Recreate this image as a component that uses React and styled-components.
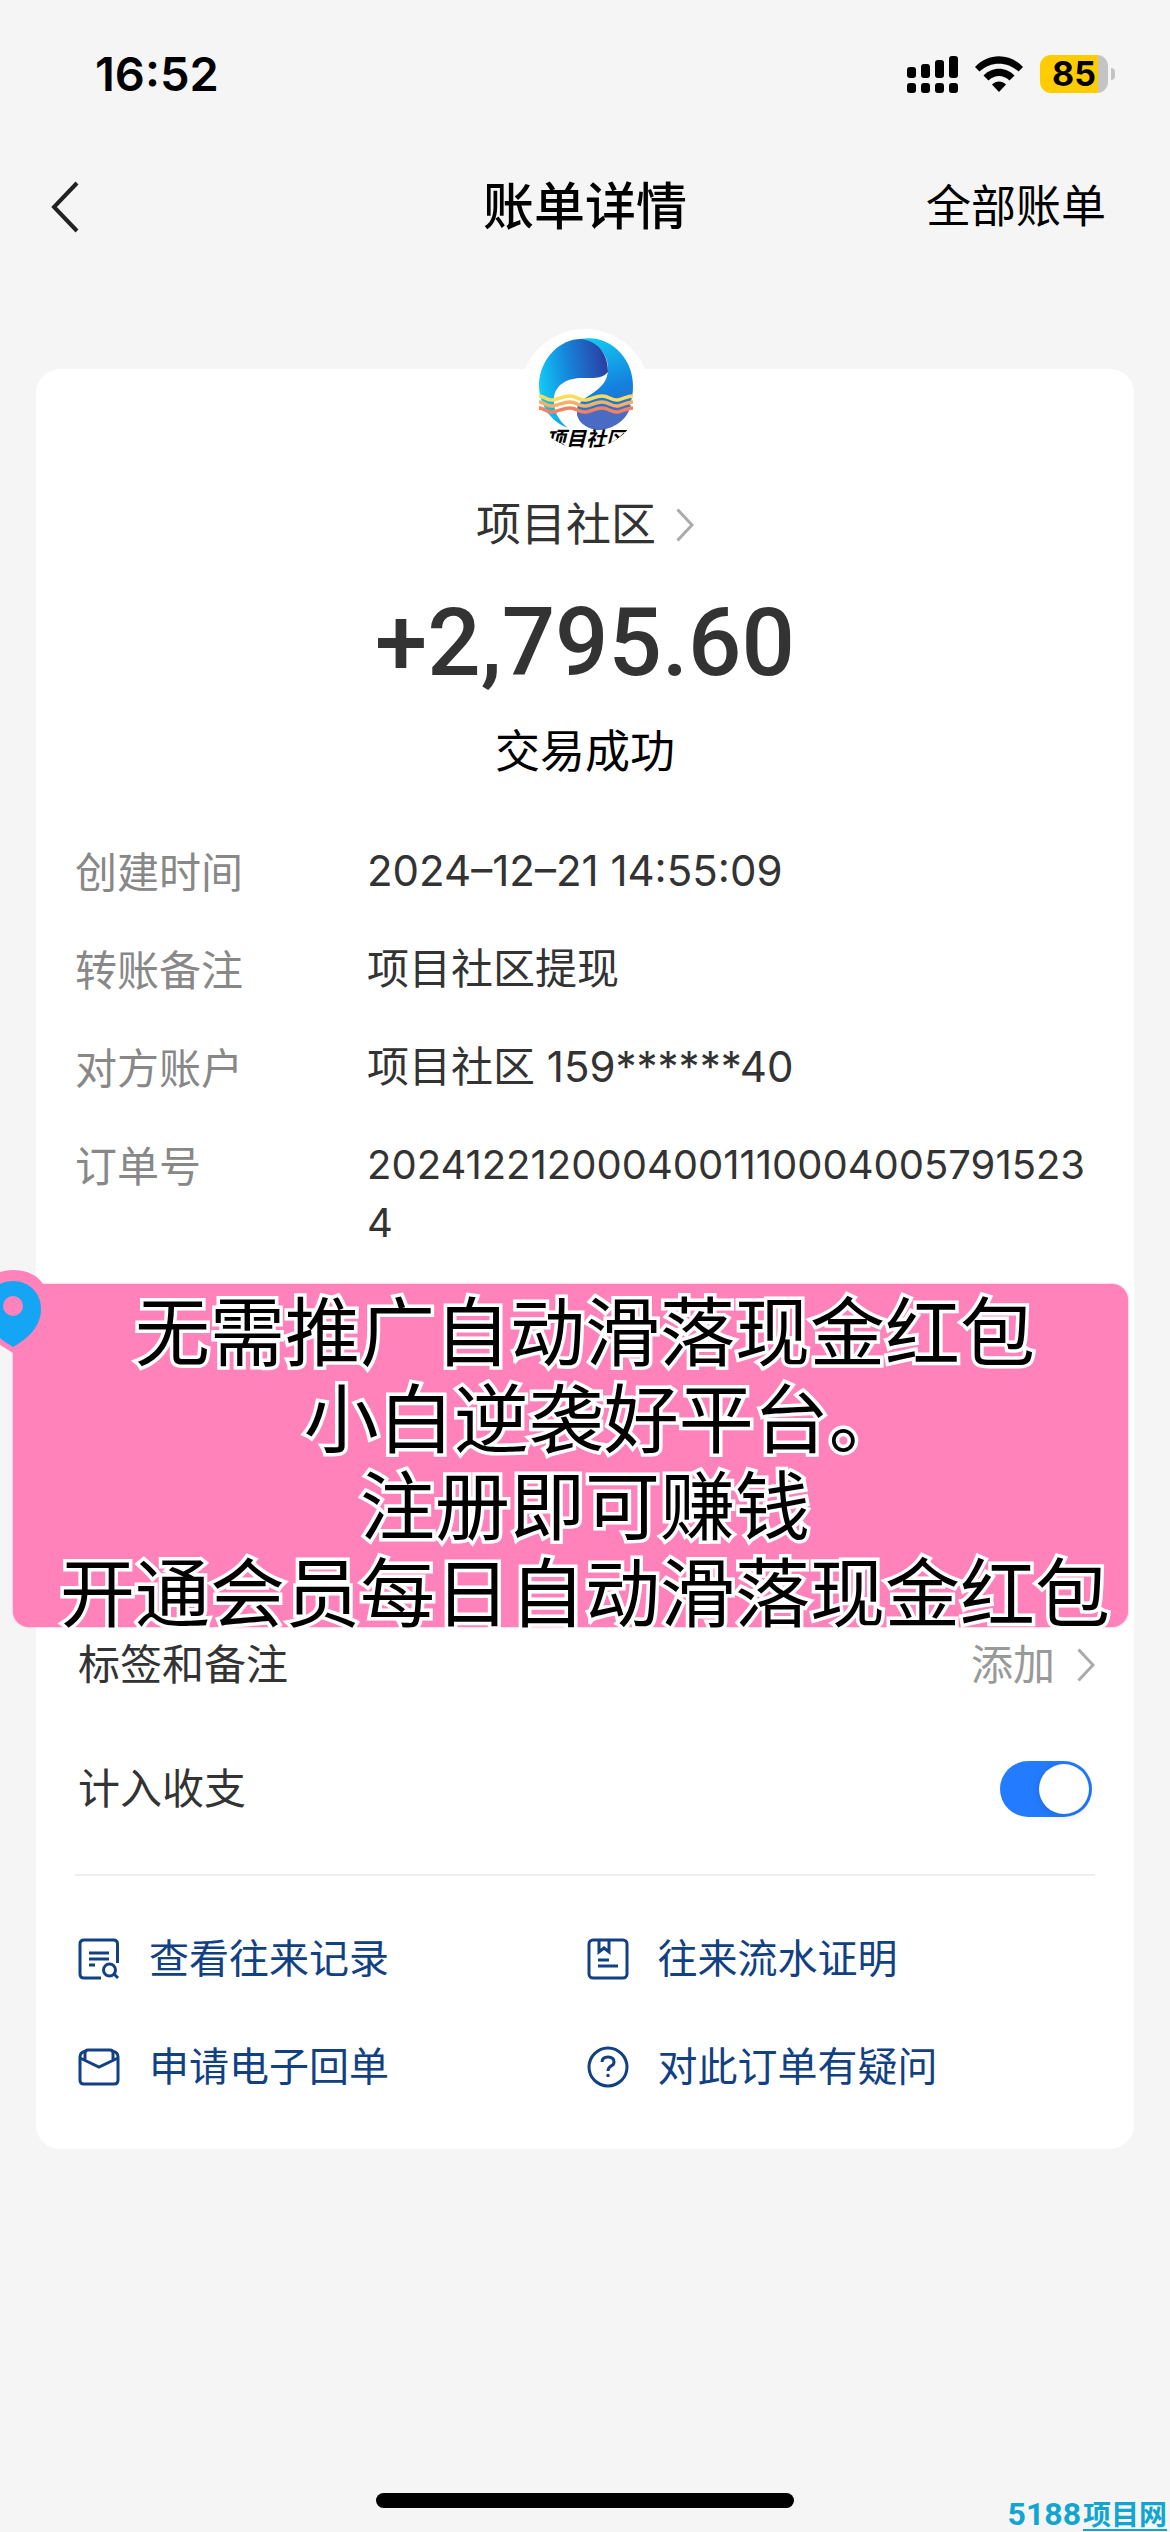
import React, { useState } from "react";
import styled, { createGlobalStyle } from "styled-components";

const GlobalStyle = createGlobalStyle`
  * {
    box-sizing: border-box;
  }

  body {
    margin: 0;
    background: #f5f5f5;
    font-family: Inter, "Noto Sans CJK SC", sans-serif;
    color: #333;
  }

  button {
    padding: 0;
    border: none;
    background: none;
    font: inherit;
    color: inherit;
    cursor: pointer;
  }
`;

const Page = styled.div`
  display: flex;
  flex-direction: column;
  min-height: 100vh;
  overflow: hidden;
`;

const StatusBar = styled.div`
  display: flex;
  align-items: center;
  justify-content: space-between;
  height: 148px;
  padding: 0 55px 0 95px;
  color: #000;
`;

const Clock = styled.span`
  font-size: 47px;
  font-weight: 600;
  line-height: 56px;
`;

const StatusIcons = styled.div`
  display: flex;
  align-items: center;
  gap: 17px;
`;

const Battery = styled.div`
  display: flex;
  align-items: center;
  gap: 3px;
`;

const BatteryBody = styled.div`
  width: 68px;
  height: 38px;
  border-radius: 11px;
  background: linear-gradient(to right, #ffcc00 58px, #c4c4c4 58px);
  font-size: 34px;
  font-weight: 700;
  line-height: 38px;
  text-align: center;
`;

const BatteryCap = styled.div`
  width: 4px;
  height: 12px;
  border-radius: 0 4px 4px 0;
  background: #c4c4c4;
`;

const NavBar = styled.header`
  display: grid;
  grid-template-columns: 1fr auto 1fr;
  align-items: center;
  height: 118px;
  padding: 0 50px;
  color: #000;
`;

const BackButton = styled.button`
  display: flex;
  justify-self: start;
`;

const Title = styled.h1`
  margin: 0;
  font-size: 51px;
  font-weight: 500;
  line-height: 72px;
`;

const AllBills = styled.button`
  justify-self: end;
  margin-right: 14px;
  font-size: 45px;
  line-height: 64px;
`;

const Card = styled.main`
  display: flex;
  flex-direction: column;
  margin: 103px 36px 0;
  padding: 0 39px 54px;
  border-radius: 24px;
  background: #fff;
`;

const Avatar = styled.div`
  display: flex;
  align-self: center;
  margin-top: -40px;
  border-radius: 50%;
  background: #fff;
`;

const Payee = styled.button`
  display: flex;
  align-self: center;
  align-items: center;
  gap: 20px;
  margin-top: 34px;
  font-size: 45px;
  line-height: 64px;
`;

const Amount = styled.div`
  margin-top: 28px;
  font-family: Roboto, sans-serif;
  font-size: 94px;
  font-weight: 500;
  line-height: 116px;
  text-align: center;
`;

const Status = styled.div`
  margin-top: 19px;
  color: #000;
  font-size: 45px;
  line-height: 64px;
  text-align: center;
`;

const Details = styled.dl`
  display: grid;
  grid-template-columns: 292px 1fr;
  row-gap: 38px;
  margin: 58px 0 0;
  font-size: 42px;
  line-height: 58px;
`;

const DetailLabel = styled.dt`
  padding-top: 2px;
  color: #888;
`;

const DetailValue = styled.dd`
  margin: 0;
  font-size: ${(props) => (props.$long ? "40px" : "42px")};
  word-break: break-all;
`;

const Banner = styled.section`
  position: relative;
  z-index: 1;
  height: 343px;
  margin: 32px -33px 0 -62px;
  padding: 5px 0 0 29px;
  border-radius: 16px;
  background: #ff82bb;
  box-shadow: 0 0 2px #ff82bb;
`;

const BannerLine = styled.p`
  margin: 0;
  color: #000;
  font-size: 75px;
  font-feature-settings: "halt";
  line-height: 87px;
  text-align: center;
  white-space: nowrap;
  -webkit-text-stroke: 7px #fff;
  paint-order: stroke fill;
`;

const BannerPin = styled.svg`
  position: absolute;
  top: -14px;
  left: -46px;
`;

const SettingRow = styled.div`
  display: flex;
  align-items: center;
  justify-content: space-between;
  height: ${(props) => props.$height};
  padding-left: 3px;
  font-size: 42px;
  line-height: 58px;
`;

const AddButton = styled.button`
  display: flex;
  align-items: center;
  gap: 22px;
  color: #999;
`;

const Switch = styled.input`
  appearance: none;
  width: 92px;
  height: 56px;
  margin: 0 3px 0 0;
  border-radius: 28px;
  background: #ccc;
  cursor: pointer;

  &::before {
    content: "";
    display: block;
    width: 50px;
    height: 50px;
    margin: 3px;
    border-radius: 50%;
    background: #fff;
    box-shadow: 0 2px 8px rgba(0, 0, 0, 0.15);
  }

  &:checked {
    background: #237bff;
  }

  &:checked::before {
    margin-left: 39px;
  }
`;

const Divider = styled.hr`
  width: 100%;
  height: 2px;
  margin: 0;
  border: none;
  background: #eee;
`;

const Links = styled.nav`
  display: grid;
  grid-template-columns: 1fr 1fr;
  row-gap: 52px;
  padding: 55px 0 0 3px;
`;

const LinkItem = styled.a`
  display: flex;
  align-items: center;
  gap: 29px;
  color: #114183;
  font-size: 40px;
  line-height: 56px;
  text-decoration: none;
`;

const Footer = styled.footer`
  display: grid;
  grid-template-columns: 1fr auto 1fr;
  align-items: end;
  margin-top: auto;
`;

const HomeIndicator = styled.div`
  grid-column: 2;
  width: 418px;
  height: 15px;
  margin-bottom: 24px;
  border-radius: 8px;
  background: #000;
`;

const Watermark = styled.div`
  display: flex;
  align-items: flex-end;
  gap: 2px;
  justify-self: end;
  margin-right: 3px;
  color: #12a5d0;
`;

const WatermarkText = styled.span`
  margin-bottom: 1px;
  border-bottom: 2px solid #12a5d0;
  font-size: 28px;
  font-weight: 700;
  line-height: 28px;
`;

const WatermarkNumber = styled.span`
  font-family: "Liberation Sans Narrow", Roboto, sans-serif;
  font-size: 32px;
  font-weight: 700;
  line-height: 36px;
`;

const SignalIcon = () => (
  <svg width="51" height="38" viewBox="0 0 51 38">
    <rect x="0" y="12" width="9" height="11" rx="3" />
    <rect x="14" y="9" width="9" height="14" rx="3" />
    <rect x="28" y="5" width="9" height="18" rx="3" />
    <rect x="42" y="1" width="9" height="22" rx="3" />
    <rect x="0" y="28" width="9" height="10" rx="3" />
    <rect x="14" y="28" width="9" height="10" rx="3" />
    <rect x="28" y="28" width="9" height="10" rx="3" />
    <rect x="42" y="28" width="9" height="10" rx="3" />
  </svg>
);

const WifiIcon = () => (
  <svg width="48" height="36" viewBox="0 0 48 36">
    <path d="M0 11 C13 -3.500 35 -3.500 48 11 L43.500 15.500 C32.500 5 15.500 5 4.500 15.500Z" />
    <path d="M8.500 19.500 C17 10.500 31 10.500 39.500 19.500 L34.500 24.500 C28.500 18.500 19.500 18.500 13.500 24.500Z" />
    <path d="M17 28.500 C21 24.500 27 24.500 31 28.500 L24 36Z" />
  </svg>
);

const ChevronRight = ({ color }) => (
  <svg width="18" height="34" viewBox="0 0 18 34" fill="none">
    <path d="M1.500 1.500 L16 17 L1.500 32.500" stroke={color} strokeWidth="3" />
  </svg>
);

const wave =
  "C25 67 26 72 33 71 C40 70 43 67 50 67 C57 67 59 72 66 71 C73 70 75 67 82 67 C89 67 92 72 98 71 C104 70 107 67 113 67";

const CommunityLogo = () => (
  <svg width="130" height="130" viewBox="0 0 130 130">
    <defs>
      <linearGradient id="right" x1="0.300" y1="0" x2="0.500" y2="1">
        <stop offset="0" stopColor="#12c8f5" />
        <stop offset="0.600" stopColor="#147fdd" />
        <stop offset="1" stopColor="#3b62c8" />
      </linearGradient>
      <linearGradient id="left" x1="0" y1="0.600" x2="1" y2="0.400">
        <stop offset="0" stopColor="#12cdf6" />
        <stop offset="0.450" stopColor="#1586dc" />
        <stop offset="1" stopColor="#2b3fa3" />
      </linearGradient>
      <clipPath id="round">
        <circle cx="65" cy="63" r="57" />
      </clipPath>
    </defs>
    <path
      d="M60 10 C90 4 114 30 113 58 C113 84 95 101 77 101 C66 99 56 92 57 80 C59 66 88 64 88 40 C88 24 78 14 60 10Z"
      fill="url(#right)"
    />
    <path
      d="M19 55 C20 28 42 9 62 10 C78 13 88 24 88 43 C82 50 74 49 65 49 C50 48 36 54 34 68 C33 82 38 91 48 99 C30 92 19 76 19 55Z"
      fill="url(#left)"
    />
    <path d="M57 84 L111 76 C107 92 92 101 77 101 C64 99 57 91 57 84Z" fill="#4a6bc4" />
    <g fill="none" strokeWidth="3.500">
      <path d={`M19 67 ${wave}`} stroke="#f8dc5c" />
      <path d={`M19 67 ${wave}`} stroke="#f8b163" transform="translate(0 6)" />
      <path d={`M19 67 ${wave}`} stroke="#f5825f" transform="translate(0 12)" />
    </g>
    <g clipPath="url(#round)">
      <text
        x="66"
        y="117"
        textAnchor="middle"
        fontSize="20"
        fontWeight="700"
        fontStyle="italic"
        fontFamily="Noto Sans CJK SC, sans-serif"
      >
        项目社区
      </text>
    </g>
  </svg>
);

const iconProps = {
  width: 42,
  height: 42,
  viewBox: "0 0 42 42",
  fill: "none",
  stroke: "currentColor",
  strokeWidth: 3,
};

const RecordsIcon = () => (
  <svg {...iconProps}>
    <path d="M39.500 25 V6 Q39.500 2 35.500 2 H6 Q2 2 2 6 V36 Q2 40 6 40 H23" />
    <path d="M11 15 H31 M11 21 H31 M11 27 H17" />
    <circle cx="31.500" cy="32" r="6" />
    <path d="M36 36 L40 40" />
  </svg>
);

const StatementIcon = () => (
  <svg {...iconProps}>
    <rect x="2" y="2" width="38" height="38" rx="4" />
    <path d="M12 2 V14 L17 10 L22 14 V2 M11 22 H22 M11 28 H31" />
  </svg>
);

const ReceiptIcon = () => (
  <svg {...iconProps}>
    <path d="M8 5 Q2 6 2 11 V34 Q2 38 6 38 H36 Q40 38 40 34 V11 Q40 6 34 5" />
    <path d="M7 14 V7 Q7 4 10 4 H32 Q35 4 35 7 V14 M2 12 L21 21 L40 12" />
  </svg>
);

const QuestionIcon = () => (
  <svg {...iconProps}>
    <circle cx="21" cy="21" r="19" />
    <path d="M15 16 Q15 11 21 11 Q27 11 27 16 Q27 19 24 20 Q21 22 21 25 M21 28 V31" />
  </svg>
);

const details = [
  { label: "创建时间", value: "2024–12–21 14:55:09" },
  { label: "转账备注", value: "项目社区提现" },
  { label: "对方账户", value: "项目社区 159******40" },
  { label: "订单号", value: "20241221200040011100040057915234", long: true },
];

const bannerLines = [
  "无需推广自动滑落现金红包",
  "小白逆袭好平台。",
  "注册即可赚钱",
  "开通会员每日自动滑落现金红包",
];

const links = [
  { label: "查看往来记录", Icon: RecordsIcon },
  { label: "往来流水证明", Icon: StatementIcon },
  { label: "申请电子回单", Icon: ReceiptIcon },
  { label: "对此订单有疑问", Icon: QuestionIcon },
];

const App = () => {
  const [counted, setCounted] = useState(true);

  return (
    <Page>
      <GlobalStyle />
      <StatusBar>
        <Clock>16:52</Clock>
        <StatusIcons>
          <SignalIcon />
          <WifiIcon />
          <Battery>
            <BatteryBody>85</BatteryBody>
            <BatteryCap />
          </Battery>
        </StatusIcons>
      </StatusBar>
      <NavBar>
        <BackButton aria-label="返回">
          <svg width="30" height="52" viewBox="0 0 30 52" fill="none">
            <path d="M27 2 L4 26 L27 50" stroke="#222" strokeWidth="4" />
          </svg>
        </BackButton>
        <Title>账单详情</Title>
        <AllBills>全部账单</AllBills>
      </NavBar>
      <Card>
        <Avatar>
          <CommunityLogo />
        </Avatar>
        <Payee>
          项目社区
          <ChevronRight color="#aaa" />
        </Payee>
        <Amount>+2,795.60</Amount>
        <Status>交易成功</Status>
        <Details>
          {details.map(({ label, value, long }) => (
            <React.Fragment key={label}>
              <DetailLabel>{label}</DetailLabel>
              <DetailValue $long={long}>{value}</DetailValue>
            </React.Fragment>
          ))}
        </Details>
        <Banner>
          <BannerPin width="80" height="96" viewBox="0 0 80 96">
            <path
              d="M46 0 C60 0 70 5 76 14 L80 30 L59 89 C38 80 8 62 8 36 C8 14 26 0 46 0Z"
              fill="#ff82bb"
            />
            <path
              d="M46 11 C62 11 74 23 74 39 C74 56 62 68 46 77 C30 68 18 56 18 39 C18 23 30 11 46 11Z"
              fill="#14a6f5"
            />
            <circle cx="46" cy="36" r="10" fill="#ff82bb" />
          </BannerPin>
          {bannerLines.map((line) => (
            <BannerLine key={line}>{line}</BannerLine>
          ))}
        </Banner>
        <SettingRow $height="76px">
          <span>标签和备注</span>
          <AddButton>
            添加
            <ChevronRight color="#aaa" />
          </AddButton>
        </SettingRow>
        <SettingRow $height="171px">
          <label htmlFor="counted">计入收支</label>
          <Switch
            id="counted"
            type="checkbox"
            checked={counted}
            onChange={(e) => setCounted(e.target.checked)}
          />
        </SettingRow>
        <Divider />
        <Links>
          {links.map(({ label, Icon }) => (
            <LinkItem key={label} href="#">
              <Icon />
              {label}
            </LinkItem>
          ))}
        </Links>
      </Card>
      <Footer>
        <HomeIndicator />
        <Watermark>
          <WatermarkNumber>5188</WatermarkNumber>
          <WatermarkText>项目网</WatermarkText>
        </Watermark>
      </Footer>
    </Page>
  );
};

export default App;
